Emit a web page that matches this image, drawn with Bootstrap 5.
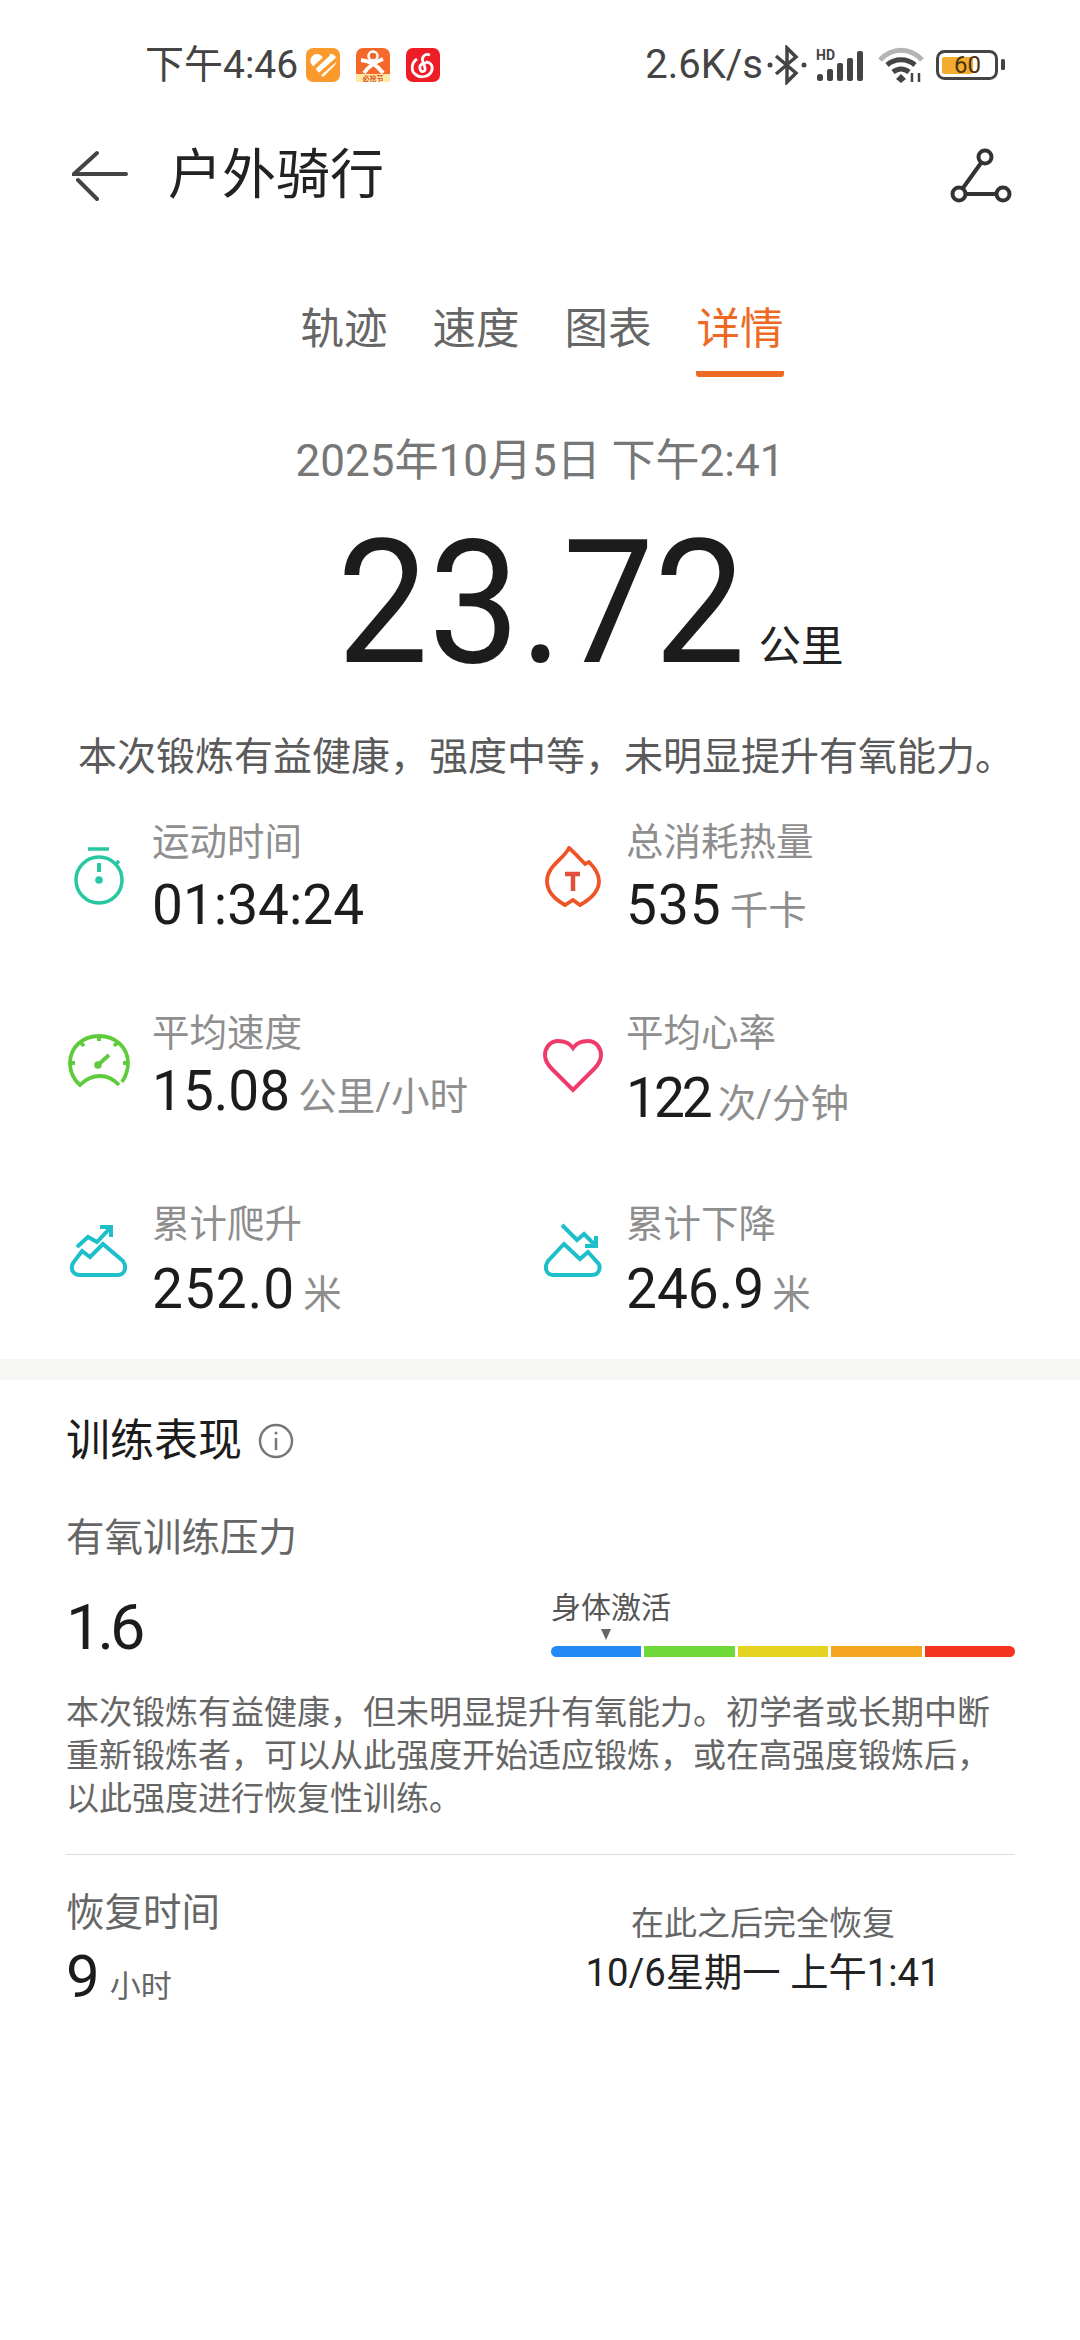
<!DOCTYPE html>
<html lang="zh-CN">
<head>
  <meta charset="UTF-8" />
  <meta name="viewport" content="width=device-width, initial-scale=1.0"/>
  <title>户外骑行</title>
  <link href="https://cdn.jsdelivr.net/npm/bootstrap@5.3.3/dist/css/bootstrap.min.css" rel="stylesheet">
  <style>
    body { width: 1080px; height: 2340px; background: #fff; overflow: hidden; color: #1c1c1c;
      font-family: Roboto, "Noto Sans CJK SC", sans-serif; }
    .status-bar { height: 126px; padding: 4px 72px 0 145px; color: #444; font-size: 39px; }
    .status-time { width: 153px; white-space: nowrap; }
    .status-speed { font-size: 40px; }
    .sig-icon { margin-left: 9px; }
    .wifi-icon { margin-left: 12px; }
    .batt-icon { margin-left: 10px; }
    .page-head { height: 100px; padding: 0 68px 0 72px; }
    .page-title { font-size: 54px; margin-left: 40px; line-height: 102px; color: #222; }
    .tab-row { margin-top: 64px; gap: 44px; padding-left: 300px; height: 87px; }
    .tab-item { font-size: 43.500px; color: #666; height: 87px; line-height: 80px; width: 88px; text-align: center; white-space: nowrap; }
    .tab-on { color: #ee6a24; border-bottom: 6px solid #ee6a24; border-radius: 0 0 3px 3px; }
    .ride-date { margin-top: 54px; font-size: 44px; line-height: 60px; color: #777; text-align: center; }
    .ride-dist { height: 190px; margin-top: 17px; padding-left: 337px; align-items: flex-end; }
    .dist-num { font-size: 173px; line-height: 190px; transform: scaleX(.94); transform-origin: left center; margin-right: -26px; color: #1c1c1c; }
    .dist-unit { font-size: 42.500px; margin-left: 13px; line-height: 60px; margin-bottom: 21px; color: #222; }
    .ride-note { margin-top: 29px; padding-left: 12px; font-size: 39px; line-height: 60px; color: #5a5a5a; text-align: center; white-space: nowrap; }
    .stat-grid { margin-top: 30px; height: 542px; }
    .stat-cell { height: 191px; }
    .stat-cell:nth-last-child(-n+2) { height: 160px; }
    .cell-left { width: 474px; padding-left: 68px; gap: 22px; }
    .cell-right { width: 606px; padding-left: 69px; gap: 21px; }
    .stat-icon { width: 62px; height: 62px; flex: none; }
    .icon-top { margin-top: 29px; }
    .icon-mid { margin-top: 23px; }
    .icon-low { margin-top: 21px; }
    .icon-heart { margin-top: 26px; }
    .stat-label { font-size: 37.500px; line-height: 50px; color: #8e8e8e; }
    .stat-num { font-size: 55px; line-height: 70px; white-space: nowrap; }
    .num-a { margin-top: 3px; }
    .num-b { margin-top: 5px; }
    .num-up { margin-top: -2px; }
    .num-wide { letter-spacing: 1px; }
    .num-tight { letter-spacing: -3px; }
    .stat-unit { font-size: 38.500px; letter-spacing: 0; color: #8e8e8e; margin-left: 8px; }
    .band { height: 21px; background: #f7f7f5; }
    .perf { padding: 0 65px 0 66px; }
    .perf-title { font-size: 44px; line-height: 60px; margin-top: 31px; }
    .perf-sub { font-size: 38.500px; line-height: 50px; color: #666; margin-top: 42px; }
    .perf-row { margin-top: 25px; }
    .perf-num { font-size: 63px; line-height: 80px; letter-spacing: -4px; }
    .zone-box { width: 464px; }
    .zone-name { font-size: 30px; line-height: 40px; color: #555; }
    .zone-tip { width: 0; height: 0; margin: 1px 0 0 50px; border-left: 5px solid transparent; border-right: 5px solid transparent; border-top: 11px solid #666; }
    .zone-bar { height: 11px; gap: 3px; margin-top: 6px; border-radius: 6px; overflow: hidden; }
    .zone-seg { flex: 1; }
    .perf-text { font-size: 33px; line-height: 43px; color: #666; white-space: nowrap; margin-top: 23px; }
    .perf-line { height: 1px; background: #ddd; margin-top: 34px; }
    .rest-label { font-size: 38.500px; line-height: 50px; color: #666; margin-top: 33px; }
    .rest-num { font-size: 60px; line-height: 78px; }
    .rest-unit { font-size: 31px; color: #666; margin-left: 10px; }
    .rest-side { width: 504px; text-align: center; margin-top: 46px; }
    .rest-after { font-size: 33px; line-height: 46px; color: #666; }
    .rest-date { font-size: 38.300px; line-height: 52px; color: #222; white-space: nowrap; }
  </style>
</head>
<body>

<!-- status bar -->
<div class="status-bar d-flex align-items-center">
  <span class="status-time">下午4:46</span>
  <svg class="ms-2" width="34" height="34" viewBox="0 0 34 34">
    <rect width="34" height="34" rx="7" fill="#fb9a2c"/>
    <path d="M17 29 L6 17 C2 12 6 6 11 6 C14 6 16 8 17 10 C19 7 22 6 25 6 C31 7 32 13 29 17 Z" fill="#fff"/>
    <path d="M8 20 L23 6 M14 26 L31 11" stroke="#fb9a2c" stroke-width="3.500"/>
  </svg>
  <svg class="ms-3" width="34" height="34" viewBox="0 0 34 34">
    <rect width="34" height="34" rx="7" fill="#f4682a"/>
    <circle cx="17" cy="8" r="4.500" fill="none" stroke="#fff" stroke-width="2.500"/>
    <path d="M5 12 C14 13 22 18 27 25 M27 11 C19 14 12 19 8 25" fill="none" stroke="#fff" stroke-width="4"/>
    <rect y="26" width="34" height="8" fill="#ffe9a8"/>
    <text x="17" y="33" font-size="7" font-weight="700" fill="#d9541a" text-anchor="middle" font-family="Noto Sans CJK SC">必抢节</text>
  </svg>
  <svg class="ms-3" width="34" height="34" viewBox="0 0 34 34">
    <rect width="34" height="34" rx="7" fill="#ee1c25"/>
    <g fill="none" stroke="#fff" stroke-width="2.800">
      <path d="M11 11 C5 15 5 23 9 26 C14 31 24 29 26 22 C27 17 24 14 20 14"/>
      <path d="M24 7 C19 5 15 9 17 14 L19 20 C20 24 15 25 14 21 C13 17 16 15 20 15"/>
    </g>
  </svg>
  <span class="ms-auto status-speed">2.6K/s</span>
  <svg class="ms-1" width="40" height="40" viewBox="0 0 40 40" fill="none" stroke="#444" stroke-width="3.500">
    <path d="M9 11 L29 28 L20 37 V3 L29 12 L9 29"/>
    <circle cx="3" cy="20" r="2.500" fill="#444" stroke="none"/><circle cx="37" cy="20" r="2.500" fill="#444" stroke="none"/>
  </svg>
  <svg class="sig-icon" width="50" height="34" viewBox="0 0 50 34" fill="#444">
    <text x="0" y="12" font-size="14" font-weight="700" font-family="Roboto">HD</text>
    <rect x="1" y="26" width="6" height="7" rx="2.500"/><rect x="11" y="21" width="6" height="12" rx="2"/><rect x="21" y="15" width="6" height="18" rx="2"/><rect x="31" y="10" width="6" height="23" rx="2"/><rect x="41" y="3" width="6" height="30" rx="2"/>
  </svg>
  <svg class="wifi-icon" width="48" height="36" viewBox="0 0 48 36" fill="none" stroke-width="5">
    <path d="M2 13 C14 0 32 0 44 13" stroke="#b4b4b4"/>
    <path d="M9 18 C17 11 29 11 37 18" stroke="#444"/>
    <path d="M15 25 C20 21 26 21 31 25" stroke="#444"/>
    <path d="M23 27 L28 32 L23 36 L18 32 Z" fill="#444" stroke="none"/>
    <path d="M34 26 V35 M41 35 V26" stroke="#444" stroke-width="2.500"/>
  </svg>
  <svg class="batt-icon" width="72" height="30" viewBox="0 0 72 30">
    <rect x="1.500" y="1.500" width="59" height="27" rx="7" fill="none" stroke="#444" stroke-width="3"/>
    <rect x="6" y="7" width="31" height="17" rx="2" fill="#f4ac30"/>
    <rect x="65" y="9" width="4" height="11" rx="1.500" fill="#444"/>
    <text x="18" y="23" font-size="24" fill="#4a3210" font-family="Roboto">60</text>
  </svg>
</div>

<!-- header -->
<div class="page-head d-flex align-items-center">
  <svg width="56" height="52" viewBox="0 0 56 52" fill="none" stroke="#444" stroke-width="4" stroke-linecap="round">
    <path d="M25 3 L2 24 H54 M6 30 L25 49"/>
  </svg>
  <div class="page-title">户外骑行</div>
  <svg class="ms-auto" width="62" height="56" viewBox="0 0 62 56" fill="none" stroke="#333" stroke-width="4">
    <circle cx="35" cy="9" r="6.500"/><circle cx="9" cy="46" r="6.500"/><circle cx="53" cy="46" r="6.500"/>
    <path d="M31 15 L13 40 M16 46 H46"/>
  </svg>
</div>

<!-- tabs -->
<div class="tab-row d-flex">
  <div class="tab-item">轨迹</div>
  <div class="tab-item">速度</div>
  <div class="tab-item">图表</div>
  <div class="tab-item tab-on">详情</div>
</div>

<div class="ride-date">2025年10月5日 下午2:41</div>
<div class="ride-dist d-flex">
  <span class="dist-num">23.72</span><span class="dist-unit">公里</span>
</div>
<div class="ride-note">本次锻炼有益健康，强度中等，未明显提升有氧能力。</div>

<!-- stats -->
<div class="stat-grid d-flex flex-wrap">
  <div class="stat-cell cell-left d-flex align-items-start">
    <svg class="stat-icon icon-top" viewBox="0 0 62 62" fill="none" stroke="#27c8a0" stroke-width="3.500">
      <path d="M20 3 H41"/><circle cx="31" cy="34" r="23"/><path d="M31 17 V26" stroke-width="4"/><circle cx="31" cy="34" r="3.800" fill="#27c8a0" stroke="none"/><path d="M47 19 L51 15"/>
    </svg>
    <div><div class="stat-label">运动时间</div><div class="stat-num num-a">01:34:24</div></div>
  </div>
  <div class="stat-cell cell-right d-flex align-items-start">
    <svg class="stat-icon icon-top" viewBox="0 0 62 62" fill="none" stroke="#ee5426" stroke-width="3.800">
      <path d="M26 2 C33 8 37 13 42 18 L46 16 C52 22 56 28 56 35 C56 47 46 54 37 59 L30 54 L22 59 C13 54 4 47 4 35 C4 20 20 14 26 2 Z"/>
      <path d="M22 28 H37 M30 28 V45" stroke="#e0503a" stroke-width="4.500"/>
    </svg>
    <div><div class="stat-label">总消耗热量</div><div class="stat-num num-a num-wide">535<span class="stat-unit">千卡</span></div></div>
  </div>
  <div class="stat-cell cell-left d-flex align-items-start">
    <svg class="stat-icon icon-mid" viewBox="0 0 62 62" fill="none" stroke="#5ecb3c" stroke-width="3.800">
      <path d="M54 51 C58 45 60 39 60 32 C60 16 47 5 31 5 C15 5 2 16 2 32 C2 40 5 48 12 54 C24 42 40 42 51 54"/>
      <path d="M31 5 V10 M13 12 L16 15 M49 12 L46 15 M2 32 H7 M60 32 H55 M31 33 L41 24"/>
      <circle cx="30" cy="34" r="3.800" fill="#5ecb3c" stroke="none"/>
    </svg>
    <div><div class="stat-label">平均速度</div><div class="stat-num num-up">15.08<span class="stat-unit">公里/小时</span></div></div>
  </div>
  <div class="stat-cell cell-right d-flex align-items-start">
    <svg class="stat-icon icon-heart" viewBox="0 0 62 62" fill="none" stroke="#ef3b6b" stroke-width="4">
      <path d="M30 14 C26 8 20 7 15 7 C7 7 2 14 2 21 C2 27 5 31 9 35 L30 56 L51 35 C55 31 58 27 58 21 C58 14 53 7 45 7 C40 7 34 8 30 14 Z"/>
    </svg>
    <div><div class="stat-label">平均心率</div><div class="stat-num num-b num-tight">122<span class="stat-unit">次/分钟</span></div></div>
  </div>
  <div class="stat-cell cell-left d-flex align-items-start">
    <svg class="stat-icon icon-low" viewBox="0 0 62 62" fill="none" stroke="#1cbfca" stroke-width="4">
      <path d="M12 55 H50 C57 55 59 47 55 41 L35 24 L22 37 L14 31 L5 43 C2 49 5 55 12 55 Z"/>
      <path d="M9 27 L20 17 L29 22 L43 7 M32 7 H43 V17"/>
    </svg>
    <div><div class="stat-label">累计爬升</div><div class="stat-num num-b num-wide">252.0<span class="stat-unit">米</span></div></div>
  </div>
  <div class="stat-cell cell-right d-flex align-items-start">
    <svg class="stat-icon icon-low" viewBox="0 0 62 62" fill="none" stroke="#1cbfca" stroke-width="4">
      <path d="M10 55 H49 C57 55 58 46 55 43 L45 32 L37 39 L21 24 L5 41 C1 47 3 55 10 55 Z"/>
      <path d="M19 5 L34 20 L41 14 L53 26 M42 26 H53 V16"/>
    </svg>
    <div><div class="stat-label">累计下降</div><div class="stat-num num-b">246.9<span class="stat-unit">米</span></div></div>
  </div>
</div>

<div class="band"></div>

<!-- performance -->
<div class="perf">
  <div class="perf-title d-flex align-items-center gap-3">训练表现
    <svg width="36" height="36" viewBox="0 0 36 36" fill="none" stroke="#777" stroke-width="2.500">
      <circle cx="18" cy="18" r="16"/><path d="M18 15 V27"/><circle cx="18" cy="10" r="1.500" fill="#777" stroke="none"/>
    </svg>
  </div>
  <div class="perf-sub">有氧训练压力</div>
  <div class="perf-row d-flex justify-content-between align-items-start">
    <div class="perf-num">1.6</div>
    <div class="zone-box">
      <div class="zone-name">身体激活</div>
      <div class="zone-tip"></div>
      <div class="zone-bar d-flex">
        <div class="zone-seg" style="background:#2289f5"></div>
        <div class="zone-seg" style="background:#6fd93a"></div>
        <div class="zone-seg" style="background:#e6d321"></div>
        <div class="zone-seg" style="background:#f3a421"></div>
        <div class="zone-seg" style="background:#f5341f"></div>
      </div>
    </div>
  </div>
  <div class="perf-text">本次锻炼有益健康，但未明显提升有氧能力。初学者或长期中断<br>重新锻炼者，可以从此强度开始适应锻炼，或在高强度锻炼后，<br>以此强度进行恢复性训练。</div>
  <div class="perf-line"></div>
  <div class="d-flex justify-content-between">
    <div>
      <div class="rest-label">恢复时间</div>
      <div class="rest-num">9<span class="rest-unit">小时</span></div>
    </div>
    <div class="rest-side">
      <div class="rest-after">在此之后完全恢复</div>
      <div class="rest-date">10/6星期一 上午1:41</div>
    </div>
  </div>
</div>

<script src="https://cdn.jsdelivr.net/npm/bootstrap@5.3.3/dist/js/bootstrap.bundle.min.js"></script>
</body>
</html>
